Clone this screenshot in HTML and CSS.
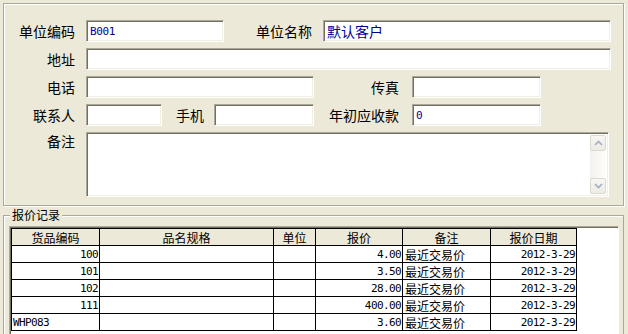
FILE: index.html
```html
<!DOCTYPE html>
<html lang="zh-CN">
<head>
    <meta charset="UTF-8">
    <title>客户资料</title>
    <link rel="stylesheet" href="styles.css">
</head>
<body>
    <div class="panel">
        <div class="row">
            <label class="lbl lbl-first">单位编码</label>
            <div class="field f-code mono">B001</div>
            <label class="lbl lbl-name">单位名称</label>
            <div class="field f-name">默认客户</div>
        </div>
        <div class="row">
            <label class="lbl lbl-first">地址</label>
            <div class="field f-addr"></div>
        </div>
        <div class="row">
            <label class="lbl lbl-first">电话</label>
            <div class="field f-tel"></div>
            <label class="lbl lbl-fax">传真</label>
            <div class="field f-fax"></div>
        </div>
        <div class="row">
            <label class="lbl lbl-first">联系人</label>
            <div class="field f-contact"></div>
            <label class="lbl lbl-mobile">手机</label>
            <div class="field f-mobile"></div>
            <label class="lbl lbl-fax">年初应收款</label>
            <div class="field f-fax mono">0</div>
        </div>
        <div class="row row-memo">
            <label class="lbl lbl-first">备注</label>
            <div class="field memo">
                <div class="memo-text"></div>
                <div class="vscroll">
                    <div class="sbtn">
                        <svg width="9" height="6" viewBox="0 0 9 6"><polyline points="1,5 4.5,1.5 8,5" fill="none" stroke="#a3aec4" stroke-width="1.6"/></svg>
                    </div>
                    <div class="strack"></div>
                    <div class="sbtn">
                        <svg width="9" height="6" viewBox="0 0 9 6"><polyline points="1,1 4.5,4.5 8,1" fill="none" stroke="#a3aec4" stroke-width="1.6"/></svg>
                    </div>
                </div>
            </div>
        </div>
    </div>

    <fieldset class="group">
        <legend>报价记录</legend>
        <div class="grid">
            <table>
                <thead>
                    <tr>
                        <th class="c1">货品编码</th>
                        <th class="c2">品名规格</th>
                        <th class="c3">单位</th>
                        <th class="c4">报价</th>
                        <th class="c5">备注</th>
                        <th class="c6">报价日期</th>
                    </tr>
                </thead>
                <tbody>
                    <tr>
                        <td class="num">100</td><td></td><td></td>
                        <td class="num">4.00</td><td>最近交易价</td><td class="num">2012-3-29</td>
                    </tr>
                    <tr>
                        <td class="num">101</td><td></td><td></td>
                        <td class="num">3.50</td><td>最近交易价</td><td class="num">2012-3-29</td>
                    </tr>
                    <tr>
                        <td class="num">102</td><td></td><td></td>
                        <td class="num">28.00</td><td>最近交易价</td><td class="num">2012-3-29</td>
                    </tr>
                    <tr>
                        <td class="num">111</td><td></td><td></td>
                        <td class="num">400.00</td><td>最近交易价</td><td class="num">2012-3-29</td>
                    </tr>
                    <tr>
                        <td class="txt">WHP083</td><td></td><td></td>
                        <td class="num">3.60</td><td>最近交易价</td><td class="num">2012-3-29</td>
                    </tr>
                </tbody>
            </table>
        </div>
    </fieldset>
</body>
</html>
```

FILE: styles.css
```css
* {
    box-sizing: border-box;
}
body {
    margin: 0;
    width: 628px;
    height: 334px;
    overflow: hidden;
    background-color: #ece9d8;
    color: #000;
    font-family: "Noto Sans CJK SC", "DejaVu Sans", sans-serif;
}
.panel {
    margin: 3px 4px 0 3px;
    height: 203px;
    padding-top: 16px;
    border: 1px solid #aca899;
    box-shadow: inset 1px 1px #fff, 1px 1px #fff;
}
.row {
    display: flex;
    align-items: center;
    height: 22px;
    margin-bottom: 6px;
}
.row-memo {
    align-items: flex-start;
    height: 65px;
}
.lbl {
    flex: none;
    text-align: right;
    font-size: 14px;
    line-height: 16px;
    white-space: nowrap;
}
.lbl-first {
    width: 71px;
    margin-right: 11px;
}
.lbl-name {
    width: 88px;
    margin-right: 11px;
}
.lbl-fax {
    width: 85px;
    margin-right: 13px;
}
.lbl-mobile {
    width: 42px;
    margin-right: 10px;
}
.row-memo .lbl {
    margin-top: 1px;
}
.field {
    flex: none;
    height: 22px;
    background-color: #fff;
    border: 1px solid;
    border-color: #aca899 #fff #fff #aca899;
    box-shadow: inset 1px 1px #716f64, inset -1px -1px #f1efe2;
    padding: 2px 0 0 3px;
    color: #00008f;
    font-size: 14px;
    line-height: 16px;
    white-space: nowrap;
    overflow: hidden;
}
.mono {
    font-family: "DejaVu Sans Mono", monospace;
    font-size: 11px;
    letter-spacing: -0.4px;
    padding-top: 3px;
}
.f-code { width: 138px; }
.f-name { width: 288px; }
.f-addr { width: 525px; }
.f-tel { width: 228px; }
.f-fax { width: 129px; }
.f-contact { width: 76px; }
.f-mobile { width: 100px; }
.memo {
    width: 523px;
    height: 65px;
    padding: 2px;
    display: flex;
}
.memo-text {
    flex: 1;
}
.vscroll {
    width: 16px;
    display: flex;
    flex-direction: column;
    background: linear-gradient(to right, #f3f1ec, #fdfdfa);
}
.sbtn {
    height: 16px;
    border: 1px solid #dcdad0;
    border-radius: 2px;
    background: linear-gradient(to bottom, #f7f7f3, #ecebe4);
    display: flex;
    align-items: center;
    justify-content: center;
}
.strack {
    flex: 1;
}

.group {
    margin: 2px 4px 0 3px;
    padding: 4px 4px 0 5px;
    height: 140px;
    border: 1px solid #aca899;
    box-shadow: inset 1px 1px #fff;
    min-width: 0;
}
.group legend {
    margin-left: 1px;
    padding: 0 2px;
    font-size: 12px;
    line-height: 14px;
    background-color: #ece9d8;
}
.grid {
    height: 120px;
    background-color: #fff;
    border: 1px solid;
    border-color: #aca899 #fff #fff #aca899;
    box-shadow: inset 1px 1px #716f64;
    padding: 1px 0 0 1px;
}
table {
    border-collapse: collapse;
    table-layout: fixed;
    width: 566px;
    font-size: 12px;
}
th, td {
    border: 1px solid #000;
    padding: 0 2px;
    height: 17px;
    line-height: 15px;
    font-weight: normal;
    white-space: nowrap;
    overflow: hidden;
}
th {
    height: 17px;
    background-color: #ece9d8;
    text-align: center;
}
.c1 { width: 88px; }
.c2 { width: 174px; }
.c3 { width: 42px; }
.c4 { width: 87px; }
.c5 { width: 88px; }
.c6 { width: 86px; }
td.num {
    text-align: right;
    font-family: "DejaVu Sans Mono", monospace;
    font-size: 11px;
    letter-spacing: -0.6px;
    padding-right: 1px;
}
td.txt {
    text-align: left;
    font-family: "DejaVu Sans Mono", monospace;
    font-size: 11px;
    letter-spacing: -0.6px;
    padding-left: 1px;
}
```
